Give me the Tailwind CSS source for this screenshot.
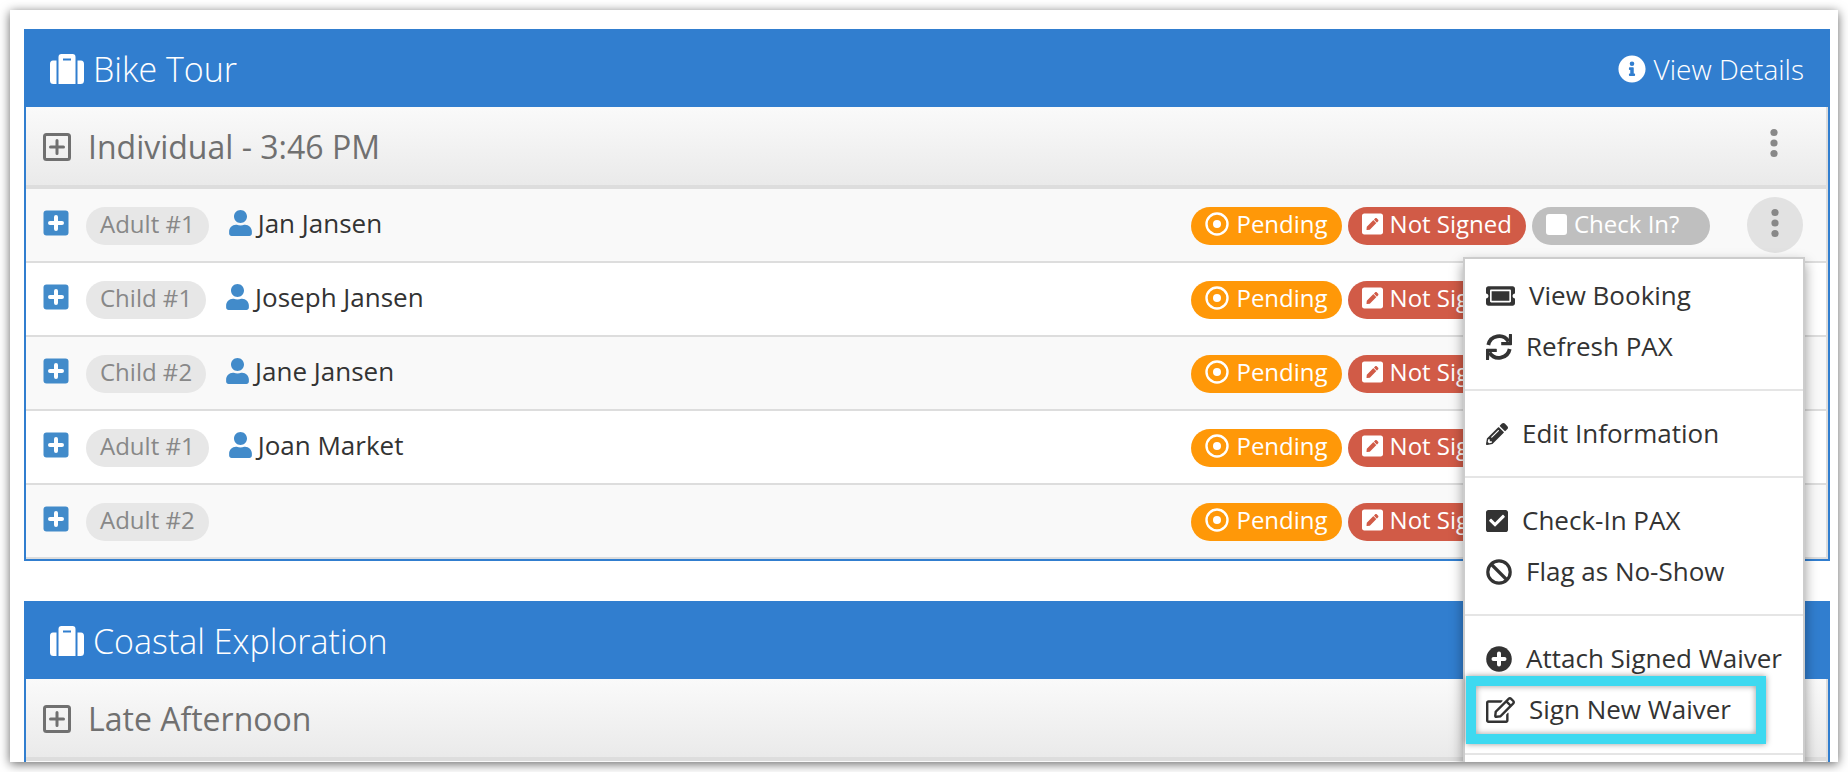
<!DOCTYPE html>
<html lang="en">
<head>
  <meta charset="UTF-8" />
  <meta name="viewport" content="width=device-width, initial-scale=1.0"/>
  <title>Manifest</title>
  <script src="https://cdn.jsdelivr.net/npm/@tailwindcss/browser@4"></script>
</head>
<body class="h-screen bg-white p-[10px] font-['Open_Sans',sans-serif] text-[#333]">

  <!-- Icons -->
  <svg class="hidden">
    <symbol id="suitcase" viewBox="0 0 34 30"><path fill="currentColor" d="M3 6.500h3.500V30H3.500A3.500 3.500 0 0 1 0 26.500V10a3.500 3.500 0 0 1 3-3.500zM31 6.500h-3.500V30h3A3.500 3.500 0 0 0 34 26.500V10a3.500 3.500 0 0 0-3-3.500zM11.500 0h11A3 3 0 0 1 25.500 3v27h-17V3a3 3 0 0 1 3-3zM13 4.500v2h8v-2z"/></symbol>
    <symbol id="info" viewBox="0 0 512 512"><path fill="currentColor" d="M256 8C119 8 8 119 8 256s111 248 248 248 248-111 248-248S393 8 256 8zm0 110a42 42 0 1 1 0 84 42 42 0 0 1 0-84zm56 254c0 6.600-5.400 12-12 12h-88c-6.600 0-12-5.400-12-12v-24c0-6.600 5.400-12 12-12h12v-64h-12c-6.600 0-12-5.400-12-12v-24c0-6.600 5.400-12 12-12h64c6.600 0 12 5.400 12 12v100h12c6.600 0 12 5.400 12 12v24z"/></symbol>
    <symbol id="plus-outline" viewBox="0 0 28 28"><rect x="1.500" y="1.500" width="25" height="25" rx="2" fill="none" stroke="currentColor" stroke-width="3"/><path stroke="currentColor" stroke-width="3" stroke-linecap="round" d="M14 7.500v13M7.500 14h13"/></symbol>
    <symbol id="plus-square" viewBox="0 0 26 26"><rect x=".5" y=".5" width="25" height="25" rx="3" fill="currentColor"/><path stroke="#fff" stroke-width="4" stroke-linecap="round" d="M13 7v12M7 13h12"/></symbol>
    <symbol id="user" viewBox="0 0 448 512"><path fill="currentColor" d="M224 256c70.700 0 128-57.300 128-128S294.700 0 224 0 96 57.300 96 128s57.300 128 128 128zm89.600 32h-16.700c-22.200 10.200-46.900 16-72.900 16s-50.600-5.800-72.900-16h-16.700C60.200 288 0 348.200 0 422.400V464c0 26.500 21.500 48 48 48h352c26.500 0 48-21.500 48-48v-41.600c0-74.200-60.200-134.400-134.400-134.400z"/></symbol>
    <symbol id="dot-circle" viewBox="0 0 24 24"><circle cx="12" cy="12" r="10.500" fill="none" stroke="currentColor" stroke-width="2.400"/><circle cx="12" cy="12" r="4" fill="currentColor"/></symbol>
    <symbol id="pen-square" viewBox="0 0 448 512"><path fill="currentColor" d="M400 480H48c-26.500 0-48-21.500-48-48V80c0-26.500 21.500-48 48-48h352c26.500 0 48 21.500 48 48v352c0 26.500-21.500 48-48 48zM238.100 177.900L102.400 313.600l-6.300 57.100c-.8 7.600 5.600 14.100 13.300 13.300l57.100-6.300L302.200 242c2.300-2.300 2.300-6.100 0-8.500L246.700 178c-2.500-2.400-6.300-2.400-8.600-.1zM345 165.100L314.900 135c-9.400-9.400-24.600-9.400-33.900 0l-23.100 23.100c-2.300 2.300-2.300 6.100 0 8.500l55.500 55.500c2.300 2.300 6.100 2.300 8.500 0L345 199c9.300-9.300 9.300-24.500 0-33.900z"/></symbol>
    <symbol id="dots" viewBox="0 0 8 30"><g fill="currentColor"><circle cx="4" cy="4.500" r="3.600"/><circle cx="4" cy="15" r="3.600"/><circle cx="4" cy="25.500" r="3.600"/></g></symbol>
    <symbol id="ticket" viewBox="0 0 576 384"><path fill="currentColor" d="M112 96h352v192H112zM528 192c0 26.500 21.500 48 48 48v96c0 26.500-21.500 48-48 48H48c-26.500 0-48-21.500-48-48v-96c26.500 0 48-21.500 48-48s-21.500-48-48-48V48C0 21.500 21.500 0 48 0h480c26.500 0 48 21.500 48 48v96c-26.500 0-48 21.500-48 48zM496 88c0-13.300-10.700-24-24-24H104c-13.300 0-24 10.700-24 24v208c0 13.300 10.700 24 24 24h368c13.300 0 24-10.700 24-24z"/></symbol>
    <symbol id="refresh" viewBox="0 0 26 26"><path fill="none" stroke="currentColor" stroke-width="3.800" d="M2.300 11A11 11 0 0 1 22.500 7.500M23.700 15A11 11 0 0 1 3.500 18.500"/><path fill="currentColor" d="M23 0h2.500a.5.500 0 0 1 .5.500v10a.8.800 0 0 1-.8.800h-9.500a.5.500 0 0 1-.5-.5V8h7.300zM3 26H.5A.5.500 0 0 1 0 25.500v-10a.8.800 0 0 1 .8-.8h9.500a.5.500 0 0 1 .5.500V18H3.500z"/></symbol>
    <symbol id="pencil" viewBox="0 0 512 512"><path fill="currentColor" d="M497.900 142.100l-46.100 46.100c-4.700 4.700-12.300 4.700-17 0l-111-111c-4.700-4.700-4.700-12.300 0-17l46.100-46.100c18.700-18.700 49.100-18.700 67.900 0l60.100 60.100c18.800 18.700 18.800 49.100 0 67.900zM284.200 99.800L21.600 362.400.4 483.900c-2.900 16.400 11.400 30.600 27.800 27.800l121.500-21.300 262.600-262.600c4.700-4.700 4.700-12.300 0-17l-111-111c-4.800-4.700-12.400-4.700-17.100 0zM124.100 339.900c-5.500-5.500-5.500-14.300 0-19.800l154-154c5.500-5.500 14.300-5.500 19.800 0s5.500 14.300 0 19.800l-154 154c-5.500 5.500-14.300 5.500-19.800 0zM88 424h48v36.300l-64.500 11.300-31.100-31.100L51.700 376H88v48z"/></symbol>
    <symbol id="check-square" viewBox="0 0 448 448"><path fill="currentColor" d="M400 448H48c-26.500 0-48-21.500-48-48V48C0 21.500 21.500 0 48 0h352c26.500 0 48 21.500 48 48v352c0 26.500-21.500 48-48 48zM195.300 332.700l184-184c6.200-6.200 6.200-16.400 0-22.600l-22.600-22.600c-6.200-6.200-16.400-6.200-22.600 0L184 253.500l-70.100-70.100c-6.200-6.200-16.400-6.200-22.600 0L68.700 206c-6.200 6.200-6.200 16.400 0 22.600l104 104c6.200 6.300 16.400 6.300 22.600.1z"/></symbol>
    <symbol id="ban" viewBox="0 0 26 26"><circle cx="13" cy="13" r="11.200" fill="none" stroke="currentColor" stroke-width="3.200"/><path stroke="currentColor" stroke-width="3.200" d="M5 5l16 16"/></symbol>
    <symbol id="plus-circle" viewBox="0 0 26 26"><circle cx="13" cy="13" r="12.800" fill="currentColor"/><path stroke="#fff" stroke-width="4" stroke-linecap="round" d="M13 7.500v11M7.500 13h11"/></symbol>
    <symbol id="edit" viewBox="0 0 576 512"><path fill="currentColor" d="M402.300 344.900l32-32c5-5 13.700-1.500 13.700 5.700V464c0 26.500-21.500 48-48 48H48c-26.500 0-48-21.500-48-48V112c0-26.500 21.500-48 48-48h273.500c7.100 0 10.700 8.600 5.700 13.700l-32 32c-1.500 1.500-3.500 2.300-5.700 2.300H48v352h352V350.500c0-2.100.8-4.100 2.300-5.600zm156.600-201.800L296.300 405.700l-90.400 10c-26.200 2.900-48.500-19.200-45.600-45.600l10-90.400L432.900 17.100c22.900-22.900 59.900-22.900 82.700 0l43.200 43.200c22.900 22.900 22.900 60 .1 82.800zM460.100 174L402 115.900 216.200 301.800l-7.300 65.300 65.300-7.300L460.100 174zm64.800-79.700l-43.200-43.200c-4.100-4.100-10.800-4.100-14.800 0L436 82l58.100 58.100 30.900-30.900c4-4.200 4-10.800-.1-14.900z"/></symbol>
  </svg>

  <main class="h-full overflow-hidden bg-white px-[14px] pt-[19px] pr-2 shadow-[0_2px_10px_rgba(0,0,0,0.6)]">

    <!-- Bike Tour -->
    <section class="mb-10 border-2 border-t-0 border-[#317ecf]">
      <header class="flex h-[78px] items-center justify-between bg-[#317ecf] px-6 pt-[2px] text-white">
        <h2 class="flex items-center gap-[9px] text-[34px] font-light"><svg class="h-[30px] w-[34px]"><use href="#suitcase"/></svg>Bike Tour</h2>
        <a href="#" class="flex items-center gap-2 text-[28px] font-light"><svg class="size-7"><use href="#info"/></svg>View Details</a>
      </header>

      <div class="border-r-2 border-[#ddd]">
        <div class="flex h-[82px] items-center justify-between border-b-4 border-[#ddd] bg-linear-to-b from-[#fafafa] to-[#eaeaea] pt-[2px] pr-12 pl-[17px] text-[#707070]">
          <h3 class="flex items-center gap-[17px] text-[32px]"><svg class="size-7"><use href="#plus-outline"/></svg>Individual - 3:46 PM</h3>
          <button type="button" aria-label="Group actions" class="mb-2 text-[#888]"><svg class="h-[30px] w-2"><use href="#dots"/></svg></button>
        </div>

        <ul>
          <li class="flex h-[74px] items-center justify-between border-b-2 border-[#ddd] bg-[#f9f9f9] pr-[23px] pl-[17px]">
            <div class="flex items-center">
              <button type="button" aria-label="Expand" class="mr-[17px] mb-1 text-[#428bca]"><svg class="size-[26px]"><use href="#plus-square"/></svg></button>
              <span class="mt-[2px] mr-5 flex h-[38px] items-center rounded-full bg-[#e7e7e7] px-[14px] pb-1 text-2xl text-[#888]">Adult #1</span>
              <span class="mb-1 flex items-center gap-[6px] text-[26px]"><svg class="h-[26px] w-[23px] text-[#428bca]"><use href="#user"/></svg>Jan Jansen</span>
            </div>
            <div class="flex items-center gap-[6px] text-2xl text-white">
              <span class="mt-[2px] flex h-[38px] items-center gap-[7px] rounded-full bg-[#ff9808] px-[14px] pb-1"><svg class="size-6"><use href="#dot-circle"/></svg>Pending</span>
              <span class="mt-[2px] flex h-[38px] items-center gap-[7px] rounded-full bg-[#d15b47] px-[14px] pb-1"><svg class="h-6 w-[21px]"><use href="#pen-square"/></svg>Not Signed</span>
              <label class="mt-[2px] flex h-[38px] w-[178px] items-center gap-[7px] rounded-full bg-[#bfbfbf] px-[14px] pb-1"><input type="checkbox" class="size-[21px] appearance-none rounded-[3px] bg-white">Check In?</label>
              <div class="relative ml-[31px]">
                <button type="button" aria-label="Passenger actions" class="flex size-14 items-center justify-center rounded-full bg-[#e2e2e2] pb-1 text-[#888]"><svg class="h-[30px] w-2"><use href="#dots"/></svg></button>

                <!-- Passenger menu -->
                <div class="absolute top-full -right-[2px] z-10 mt-1 w-[342px] border-2 border-[#ccc] bg-white pt-[11px] text-[26px] whitespace-nowrap text-[#333] shadow-[0_6px_12px_rgba(0,0,0,0.4)]">
                  <ul class="border-b-2 border-[#e5e5e5] pb-[17px]">
                    <li><a href="#" class="flex h-[51px] items-center gap-[14px] px-[21px]"><svg class="h-5 w-[29px]"><use href="#ticket"/></svg>View Booking</a></li>
                    <li><a href="#" class="flex h-[51px] items-center gap-[14px] px-[21px]"><svg class="size-[26px]"><use href="#refresh"/></svg>Refresh PAX</a></li>
                  </ul>
                  <ul class="border-b-2 border-[#e5e5e5] py-[17px]">
                    <li><a href="#" class="flex h-[51px] items-center gap-[14px] px-[21px]"><svg class="size-[22px]"><use href="#pencil"/></svg>Edit Information</a></li>
                  </ul>
                  <ul class="border-b-2 border-[#e5e5e5] py-[17px]">
                    <li><a href="#" class="flex h-[51px] items-center gap-[14px] px-[21px]"><svg class="size-[22px]"><use href="#check-square"/></svg>Check-In PAX</a></li>
                    <li><a href="#" class="flex h-[51px] items-center gap-[14px] px-[21px]"><svg class="size-[26px]"><use href="#ban"/></svg>Flag as No-Show</a></li>
                  </ul>
                  <ul class="border-b-2 border-[#e5e5e5] pt-[17px] pb-[18px]">
                    <li><a href="#" class="flex h-[51px] items-center gap-[14px] px-[21px]"><svg class="size-[26px]"><use href="#plus-circle"/></svg>Attach Signed Waiver</a></li>
                    <li class="relative">
                      <a href="#" class="flex h-[51px] items-center gap-[14px] px-[21px]"><svg class="h-[26px] w-[29px]"><use href="#edit"/></svg>Sign New Waiver</a>
                      <div class="pointer-events-none absolute -top-2 -bottom-[9px] left-px w-[300px] border-10 border-[#3dd9f0] shadow-[0_0_6px_rgba(0,0,0,0.4),inset_0_0_6px_rgba(0,0,0,0.4)]"></div>
                    </li>
                  </ul>
                  <div class="h-10"></div>
                </div>
              </div>
            </div>
          </li>

          <li class="flex h-[74px] items-center justify-between border-b-2 border-[#ddd] bg-white pr-[23px] pl-[17px]">
            <div class="flex items-center">
              <button type="button" aria-label="Expand" class="mr-[17px] mb-1 text-[#428bca]"><svg class="size-[26px]"><use href="#plus-square"/></svg></button>
              <span class="mt-[2px] mr-5 flex h-[38px] items-center rounded-full bg-[#e7e7e7] px-[14px] pb-1 text-2xl text-[#888]">Child #1</span>
              <span class="mb-1 flex items-center gap-[6px] text-[26px]"><svg class="h-[26px] w-[23px] text-[#428bca]"><use href="#user"/></svg>Joseph Jansen</span>
            </div>
            <div class="mr-[277px] flex items-center gap-[6px] text-2xl text-white">
              <span class="mt-[2px] flex h-[38px] items-center gap-[7px] rounded-full bg-[#ff9808] px-[14px] pb-1"><svg class="size-6"><use href="#dot-circle"/></svg>Pending</span>
              <span class="mt-[2px] flex h-[38px] items-center gap-[7px] rounded-full bg-[#d15b47] px-[14px] pb-1"><svg class="h-6 w-[21px]"><use href="#pen-square"/></svg>Not Signed</span>
            </div>
          </li>

          <li class="flex h-[74px] items-center justify-between border-b-2 border-[#ddd] bg-[#f9f9f9] pr-[23px] pl-[17px]">
            <div class="flex items-center">
              <button type="button" aria-label="Expand" class="mr-[17px] mb-1 text-[#428bca]"><svg class="size-[26px]"><use href="#plus-square"/></svg></button>
              <span class="mt-[2px] mr-5 flex h-[38px] items-center rounded-full bg-[#e7e7e7] px-[14px] pb-1 text-2xl text-[#888]">Child #2</span>
              <span class="mb-1 flex items-center gap-[6px] text-[26px]"><svg class="h-[26px] w-[23px] text-[#428bca]"><use href="#user"/></svg>Jane Jansen</span>
            </div>
            <div class="mr-[277px] flex items-center gap-[6px] text-2xl text-white">
              <span class="mt-[2px] flex h-[38px] items-center gap-[7px] rounded-full bg-[#ff9808] px-[14px] pb-1"><svg class="size-6"><use href="#dot-circle"/></svg>Pending</span>
              <span class="mt-[2px] flex h-[38px] items-center gap-[7px] rounded-full bg-[#d15b47] px-[14px] pb-1"><svg class="h-6 w-[21px]"><use href="#pen-square"/></svg>Not Signed</span>
            </div>
          </li>

          <li class="flex h-[74px] items-center justify-between border-b-2 border-[#ddd] bg-white pr-[23px] pl-[17px]">
            <div class="flex items-center">
              <button type="button" aria-label="Expand" class="mr-[17px] mb-1 text-[#428bca]"><svg class="size-[26px]"><use href="#plus-square"/></svg></button>
              <span class="mt-[2px] mr-5 flex h-[38px] items-center rounded-full bg-[#e7e7e7] px-[14px] pb-1 text-2xl text-[#888]">Adult #1</span>
              <span class="mb-1 flex items-center gap-[6px] text-[26px]"><svg class="h-[26px] w-[23px] text-[#428bca]"><use href="#user"/></svg>Joan Market</span>
            </div>
            <div class="mr-[277px] flex items-center gap-[6px] text-2xl text-white">
              <span class="mt-[2px] flex h-[38px] items-center gap-[7px] rounded-full bg-[#ff9808] px-[14px] pb-1"><svg class="size-6"><use href="#dot-circle"/></svg>Pending</span>
              <span class="mt-[2px] flex h-[38px] items-center gap-[7px] rounded-full bg-[#d15b47] px-[14px] pb-1"><svg class="h-6 w-[21px]"><use href="#pen-square"/></svg>Not Signed</span>
            </div>
          </li>

          <li class="flex h-[74px] items-center justify-between border-b-2 border-[#ddd] bg-[#f9f9f9] pr-[23px] pl-[17px]">
            <div class="flex items-center">
              <button type="button" aria-label="Expand" class="mr-[17px] mb-1 text-[#428bca]"><svg class="size-[26px]"><use href="#plus-square"/></svg></button>
              <span class="mt-[2px] flex h-[38px] items-center rounded-full bg-[#e7e7e7] px-[14px] pb-1 text-2xl text-[#888]">Adult #2</span>
            </div>
            <div class="mr-[277px] flex items-center gap-[6px] text-2xl text-white">
              <span class="mt-[2px] flex h-[38px] items-center gap-[7px] rounded-full bg-[#ff9808] px-[14px] pb-1"><svg class="size-6"><use href="#dot-circle"/></svg>Pending</span>
              <span class="mt-[2px] flex h-[38px] items-center gap-[7px] rounded-full bg-[#d15b47] px-[14px] pb-1"><svg class="h-6 w-[21px]"><use href="#pen-square"/></svg>Not Signed</span>
            </div>
          </li>
        </ul>
      </div>
    </section>

    <!-- Coastal Exploration -->
    <section class="border-2 border-t-0 border-[#317ecf]">
      <header class="flex h-[78px] items-center bg-[#317ecf] px-6 pt-[2px] text-white">
        <h2 class="flex items-center gap-[9px] text-[34px] font-light"><svg class="h-[30px] w-[34px]"><use href="#suitcase"/></svg>Coastal Exploration</h2>
      </header>
      <div class="border-r-2 border-[#ddd]">
        <div class="flex h-[82px] items-center border-b-4 border-[#ddd] bg-linear-to-b from-[#fafafa] to-[#eaeaea] pt-[2px] pr-12 pl-[17px] text-[#707070]">
          <h3 class="flex items-center gap-[17px] text-[32px]"><svg class="size-7"><use href="#plus-outline"/></svg>Late Afternoon</h3>
        </div>
        <div class="h-[74px] bg-[#f9f9f9]"></div>
      </div>
    </section>
  </main>

</body>
</html>
